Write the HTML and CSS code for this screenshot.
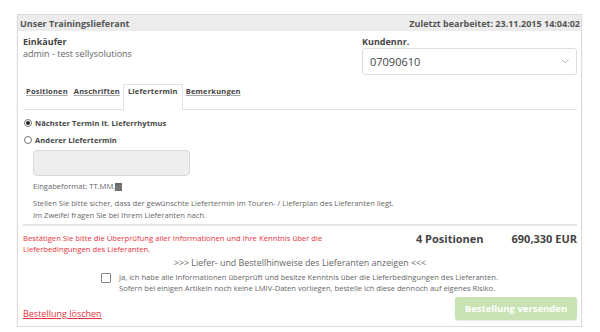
FILE: index.html
```html
<!DOCTYPE html>
<html lang="de">
<head>
<meta charset="UTF-8">
<title>Bestellung</title>
<link rel="stylesheet" href="styles.css">
</head>
<body>
<div class="order-box">
    <div class="order-head">
        <span class="supplier">Unser Trainingslieferant</span>
        <span class="edited">Zuletzt bearbeitet: 23.11.2015 14:04:02</span>
    </div>
    <div class="order-body">
        <div class="top-row">
            <div class="buyer">
                <div class="label">Einkäufer</div>
                <div class="value">admin - test sellysolutions</div>
            </div>
            <div class="customer">
                <div class="label">Kundennr.</div>
                <div class="select">
                    <span>07090610</span>
                    <svg width="8" height="5" viewBox="0 0 8 5"><path d="M0.5 0.5l3.5 3.5 3.5-3.5" fill="none" stroke="#aaa" stroke-width="0.8"/></svg>
                </div>
            </div>
        </div>

        <div class="tabs">
            <a class="tab">Positionen</a>
            <a class="tab">Anschriften</a>
            <a class="tab active">Liefertermin</a>
            <a class="tab">Bemerkungen</a>
        </div>

        <div class="tab-content">
            <label class="radio"><span class="dot checked"></span>Nächster Termin lt. Lieferrhytmus</label>
            <label class="radio"><span class="dot"></span>Anderer Liefertermin</label>
            <div class="date-input"></div>
            <p class="hint">Eingabeformat: TT.MM.<span class="mark">JJJJ</span></p>
            <p class="hint">Stellen Sie bitte sicher, dass der gewünschte Liefertermin im Touren- / Lieferplan des Lieferanten liegt.<br>Im Zweifel fragen Sie bei Ihrem Lieferanten nach.</p>
        </div>

        <div class="summary">
            <div class="warning">Bestätigen Sie bitte die Überprüfung aller Informationen und Ihre Kenntnis über die Lieferbedingungen des Lieferanten.</div>
            <div class="count">4 Positionen</div>
            <div class="total">690,330 EUR</div>
        </div>

        <div class="notes-link">&gt;&gt;&gt; Liefer- und Bestellhinweise des Lieferanten anzeigen &lt;&lt;&lt;</div>

        <label class="confirm">
            <span class="box"></span>
            <span>Ja, ich habe alle Informationen überprüft und besitze Kenntnis über die Lieferbedingungen des Lieferanten.<br>Sofern bei einigen Artikeln noch keine LMIV-Daten vorliegen, bestelle ich diese dennoch auf eigenes Risiko.</span>
        </label>

        <div class="actions">
            <a class="delete">Bestellung löschen</a>
            <button class="send">Bestellung versenden</button>
        </div>
    </div>
</div>
</body>
</html>
```

FILE: styles.css
```css
body {
    margin: 0;
    padding: 14px 0 0 17px;
    background-color: #fff;
    font-family: "Open Sans", "Liberation Sans", sans-serif;
    color: #555;
}
.order-box {
    width: 565px;
    border: 1px solid #dcdcdc;
    box-sizing: border-box;
    box-shadow: 0 1px 2px rgba(0, 0, 0, 0.08);
}
.order-head {
    display: flex;
    justify-content: space-between;
    align-items: center;
    height: 16px;
    padding: 0 1px 0 2px;
    background-color: #ececec;
    font-size: 9px;
    font-weight: bold;
    color: #555;
}
.order-body {
    padding: 0 4px 6px 5px;
}
.top-row {
    display: flex;
    justify-content: space-between;
    height: 48px;
    padding-top: 5px;
}
.label {
    font-size: 9px;
    font-weight: bold;
    color: #444;
    line-height: 12px;
}
.value {
    font-size: 9px;
    line-height: 12px;
    color: #666;
}
.customer {
    width: 215px;
}
.select {
    display: flex;
    justify-content: space-between;
    align-items: center;
    height: 27px;
    padding: 0 7px;
    border: 1px solid #ddd;
    border-radius: 3px;
    box-sizing: border-box;
    font-size: 11px;
    color: #444;
}
.tabs {
    display: flex;
    align-items: flex-end;
    height: 25px;
    border-bottom: 1px solid #e2e2e2;
}
.tab {
    padding: 0 3px 13px;
    font-size: 7.5px;
    line-height: 10px;
    font-weight: bold;
    letter-spacing: 0.2px;
    color: #444;
    text-decoration: underline;
    text-decoration-color: #aaa;
}
.tab.active {
    margin-bottom: -1px;
    padding: 1px 4px 14px;
    border: 1px solid #e2e2e2;
    border-bottom: none;
    background-color: #fff;
    text-decoration: none;
}
.tab-content {
    padding: 4px 0 0 1px;
}
.radio {
    display: flex;
    align-items: center;
    height: 17px;
    font-size: 7.5px;
    font-weight: bold;
    letter-spacing: 0.1px;
    color: #444;
}
.dot {
    width: 8px;
    height: 8px;
    margin-right: 3px;
    border: 1px solid #777;
    border-radius: 50%;
    box-sizing: border-box;
    position: relative;
}
.dot.checked::after {
    content: "";
    position: absolute;
    left: 1px;
    top: 1px;
    width: 4px;
    height: 4px;
    border-radius: 50%;
    background-color: #222;
}
.date-input {
    width: 157px;
    height: 26px;
    margin: 2px 0 0 9px;
    border: 1px solid #d8d8d8;
    border-radius: 4px;
    background-color: #eee;
    box-sizing: border-box;
}
.hint {
    margin: 4px 0 0 9px;
    font-size: 7.6px;
    line-height: 12px;
    color: #666;
}
.mark {
    background-color: #666;
    color: #999;
    font-size: 6px;
}
.summary {
    display: flex;
    align-items: flex-start;
    margin-top: 3px;
    padding-top: 7px;
    border-top: 2px solid #e5e5e5;
}
.warning {
    width: 310px;
    font-size: 7.7px;
    line-height: 11px;
    color: #e8323c;
}
.count {
    margin-left: auto;
    font-size: 11px;
    line-height: 11px;
    font-weight: bold;
    color: #444;
}
.total {
    margin-left: 28px;
    font-size: 11px;
    line-height: 11px;
    font-weight: bold;
    color: #444;
}
.notes-link {
    margin-top: 1px;
    text-align: center;
    font-size: 8.9px;
    line-height: 14px;
    color: #666;
}
.confirm {
    display: flex;
    margin: 2px 0 0 78px;
    font-size: 7.6px;
    line-height: 11px;
    color: #666;
}
.box {
    flex: none;
    width: 8px;
    height: 8px;
    margin: 1px 8px 0 0;
    border: 1px solid #888;
    border-radius: 1px;
}
.actions {
    display: flex;
    justify-content: space-between;
    align-items: flex-end;
    margin-top: 3px;
}
.delete {
    font-size: 9px;
    line-height: 12px;
    color: #e8323c;
    text-decoration: underline;
}
.send {
    width: 122px;
    height: 23px;
    border: none;
    border-radius: 3px;
    background-color: #c9e2b3;
    color: #fff;
    font-family: inherit;
    font-size: 9.5px;
    font-weight: bold;
    box-shadow: 0 1px 2px rgba(0, 0, 0, 0.1);
}
```
